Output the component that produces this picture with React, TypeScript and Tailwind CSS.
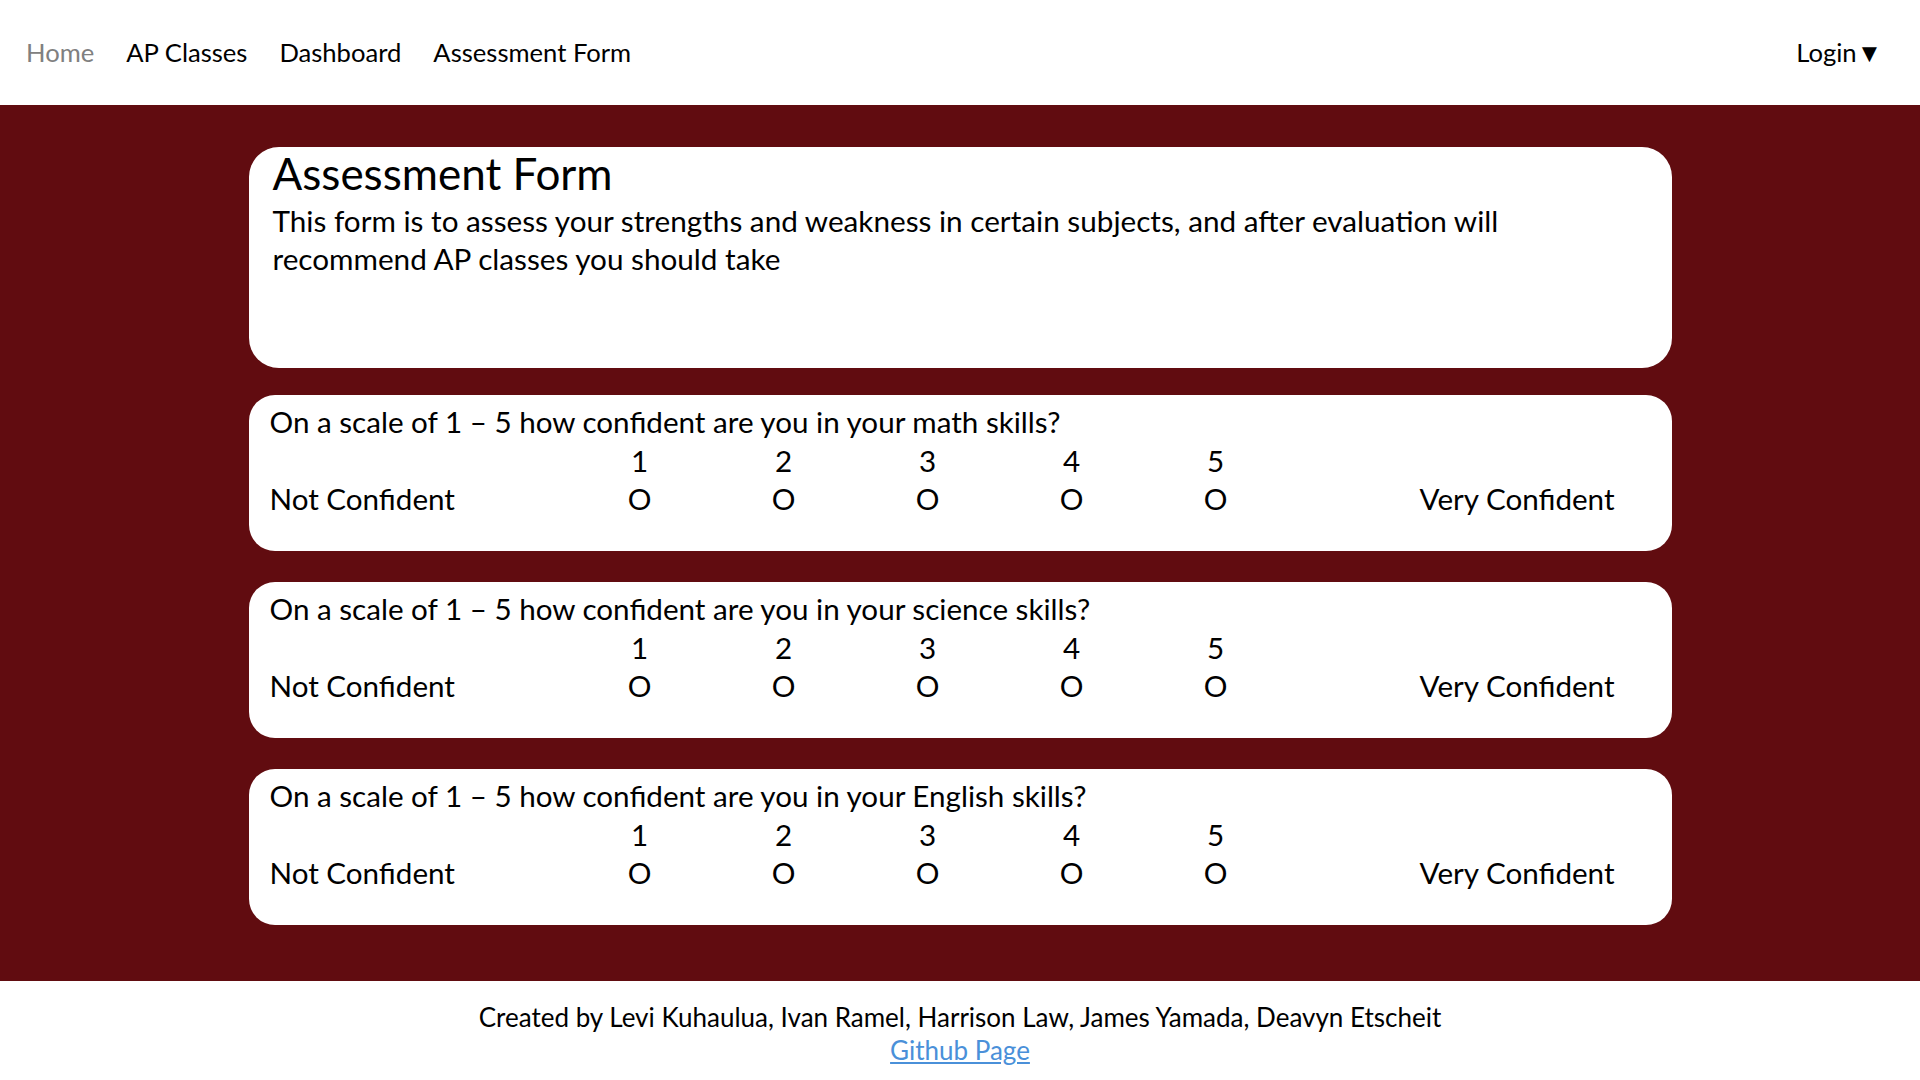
import React from 'react';

const subjects = ['math', 'science', 'English'];
const scale = [1, 2, 3, 4, 5];

const NavBar: React.FC = () => (
  <nav className="h-[105px] bg-white flex items-center justify-between pl-[26px] pr-[38px] text-[25.6px] text-black">
    <ul className="flex items-center gap-[32px]">
      <li className="text-[#808080]">Home</li>
      <li>AP Classes</li>
      <li>Dashboard</li>
      <li>Assessment Form</li>
    </ul>
    <div>Login▼</div>
  </nav>
);

const Question: React.FC<{ subject: string }> = ({ subject }) => (
  <div className="bg-white rounded-[26px] h-[156px] pt-[8px] pl-[21px] pr-[57px] text-[29.6px] leading-[38.6px] text-black">
    <p>On a scale of 1 – 5 how confident are you in your {subject} skills?</p>
    <div className="grid grid-cols-[298px_repeat(5,144px)_1fr]">
      <div />
      {scale.map((n) => (
        <div key={n} className="text-center">{n}</div>
      ))}
      <div />
      <div>Not Confident</div>
      {scale.map((n) => (
        <div key={n} className="text-center">O</div>
      ))}
      <div className="text-right">Very Confident</div>
    </div>
  </div>
);

const App: React.FC = () => {
  return (
    <div className="min-h-screen bg-white font-['Lato','Liberation_Sans',sans-serif]">
      <NavBar />
      <main className="bg-[#610c10] pt-[42px] pb-[56px]">
        <div className="w-[1423px] mx-auto flex flex-col">
          <section className="bg-white rounded-[30px] h-[221px] px-[24px] text-black">
            <h1 className="text-[44px] leading-[52px]">Assessment Form</h1>
            <p className="mt-[3px] text-[29.7px] leading-[38px] max-w-[1300px]">
              This form is to assess your strengths and weakness in certain subjects, and after evaluation will recommend AP classes you should take
            </p>
          </section>
          <div className="mt-[27px] flex flex-col gap-[31px]">
            {subjects.map((s) => (
              <Question key={s} subject={s} />
            ))}
          </div>
        </div>
      </main>
      <footer className="bg-white pt-[20px] pb-[14px] text-center text-[26px] leading-[33px] text-black">
        <p>Created by Levi Kuhaulua, Ivan Ramel, Harrison Law, James Yamada, Deavyn Etscheit</p>
        <a className="text-[#4a90d9] underline">Github Page</a>
      </footer>
    </div>
  );
};

export default App;
